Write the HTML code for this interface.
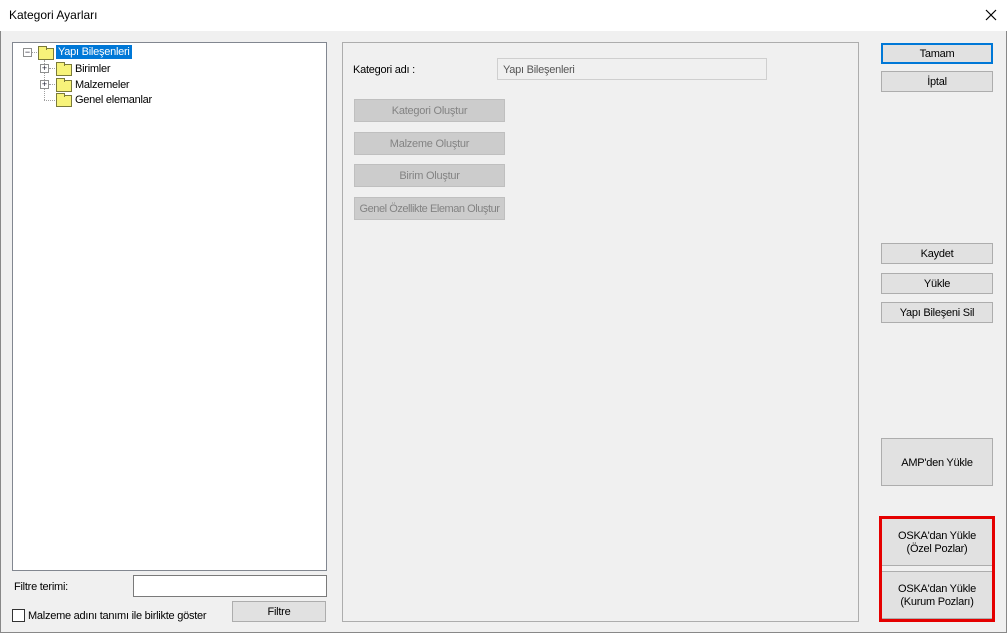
<!DOCTYPE html>
<html><head><meta charset="utf-8"><style>
*{box-sizing:border-box;margin:0;padding:0}
body{width:1007px;height:633px;background:#f0f0f0;font-family:"Liberation Sans",Tahoma,sans-serif;font-size:11px;letter-spacing:-0.25px;color:#000;position:relative;overflow:hidden}
.win{position:absolute;left:0;top:0;width:1007px;height:633px;border:1px solid #888}
.title{position:absolute;left:0;top:0;width:1007px;height:31px;background:#fff;font-size:12px;letter-spacing:0}
.title span{position:absolute;left:9px;top:8px}
.abs{position:absolute;white-space:nowrap}
.btn{position:absolute;background:#e1e1e1;border:1px solid #adadad;text-align:center;display:flex;align-items:center;justify-content:center;line-height:13px;padding-top:2px;white-space:nowrap}
.dis{background:#cccccc;border-color:#bfbfbf;color:#838383}
.tree{position:absolute;left:12px;top:42px;width:315px;height:529px;background:#fff;border:1px solid #828790}
.folder{position:absolute;width:16px;height:12px;background:#f7f37a;border:1px solid #7a7a3a}
.folder:before{content:"";position:absolute;left:-1px;top:-3px;width:7px;height:3px;background:#f7f37a;border:1px solid #7a7a3a;border-bottom:none}
.pm{position:absolute;width:9px;height:9px;border:1px solid #8e8f8f;background:#fff;font-size:9px;line-height:7px;text-align:center;color:#223;letter-spacing:0}
.dot{position:absolute;border-color:#a0a0a0;border-style:dotted}
</style></head><body>
<div class="win"></div>
<div class="title"><span>Kategori Ayarları</span>
<svg class="abs" style="left:985px;top:9px" width="12" height="12"><path d="M1 1L11 11M11 1L1 11" stroke="#000" stroke-width="1.2"/></svg></div>

<div class="tree">
 <div class="pm" style="left:10px;top:5px">−</div>
 <div class="dot" style="left:19px;top:9px;width:5px;border-top-width:1px;border-left:0;border-right:0;border-bottom:0"></div>
 <div class="folder" style="left:25px;top:5px"></div>
 <div class="abs" style="left:43px;top:2px;background:#0078d7;color:#fff;padding:1px 2px 1px 2px;font-size:11px">Yapı Bileşenleri</div>
 <div class="dot" style="left:31px;top:17px;height:40px;border-left-width:1px;border-top:0;border-right:0;border-bottom:0"></div>
 <div class="pm" style="left:27px;top:21px">+</div>
 <div class="dot" style="left:36px;top:25px;width:6px;border-top-width:1px;border-left:0;border-right:0;border-bottom:0"></div>
 <div class="folder" style="left:43px;top:21px"></div>
 <div class="abs" style="left:62px;top:20px">Birimler</div>
 <div class="pm" style="left:27px;top:37px">+</div>
 <div class="dot" style="left:36px;top:41px;width:6px;border-top-width:1px;border-left:0;border-right:0;border-bottom:0"></div>
 <div class="folder" style="left:43px;top:37px"></div>
 <div class="abs" style="left:62px;top:36px">Malzemeler</div>
 <div class="dot" style="left:31px;top:57px;width:11px;border-top-width:1px;border-left:0;border-right:0;border-bottom:0"></div>
 <div class="folder" style="left:43px;top:52px"></div>
 <div class="abs" style="left:62px;top:51px">Genel elemanlar</div>
</div>

<div class="abs" style="left:14px;top:581px">Filtre terimi:</div>
<div class="abs" style="left:133px;top:575px;width:194px;height:22px;background:#fff;border:1px solid #7a7a7a"></div>
<div class="abs" style="left:12px;top:609px;width:13px;height:13px;background:#fff;border:1px solid #333"></div>
<div class="abs" style="left:28px;top:610px">Malzeme adını tanımı ile birlikte göster</div>
<div class="btn" style="left:232px;top:601px;width:94px;height:21px">Filtre</div>

<div class="abs" style="left:342px;top:42px;width:517px;height:580px;border:1px solid #adadad"></div>
<div class="abs" style="left:353px;top:64px">Kategori adı :</div>
<div class="abs" style="left:497px;top:58px;width:270px;height:22px;border:1px solid #cfcfcf;background:#f0f0f0;color:#555;padding:5px 5px">Yapı Bileşenleri</div>
<div class="btn dis" style="left:354px;top:99px;width:151px;height:23px">Kategori Oluştur</div>
<div class="btn dis" style="left:354px;top:132px;width:151px;height:23px">Malzeme Oluştur</div>
<div class="btn dis" style="left:354px;top:164px;width:151px;height:23px">Birim Oluştur</div>
<div class="btn dis" style="left:354px;top:197px;width:151px;height:23px;letter-spacing:-0.45px">Genel Özellikte Eleman Oluştur</div>

<div class="btn" style="left:881px;top:43px;width:112px;height:21px;border:2px solid #0078d7">Tamam</div>
<div class="btn" style="left:881px;top:71px;width:112px;height:21px">İptal</div>
<div class="btn" style="left:881px;top:243px;width:112px;height:21px">Kaydet</div>
<div class="btn" style="left:881px;top:273px;width:112px;height:21px">Yükle</div>
<div class="btn" style="left:881px;top:302px;width:112px;height:21px">Yapı Bileşeni Sil</div>
<div class="btn" style="left:881px;top:438px;width:112px;height:48px">AMP'den Yükle</div>
<div class="btn" style="left:881px;top:518px;width:112px;height:48px">OSKA'dan Yükle<br>(Özel Pozlar)</div>
<div class="btn" style="left:881px;top:571px;width:112px;height:48px">OSKA'dan Yükle<br>(Kurum Pozları)</div>
<div class="abs" style="left:879px;top:516px;width:116px;height:106px;border:3px solid #e50000"></div>
</body></html>
